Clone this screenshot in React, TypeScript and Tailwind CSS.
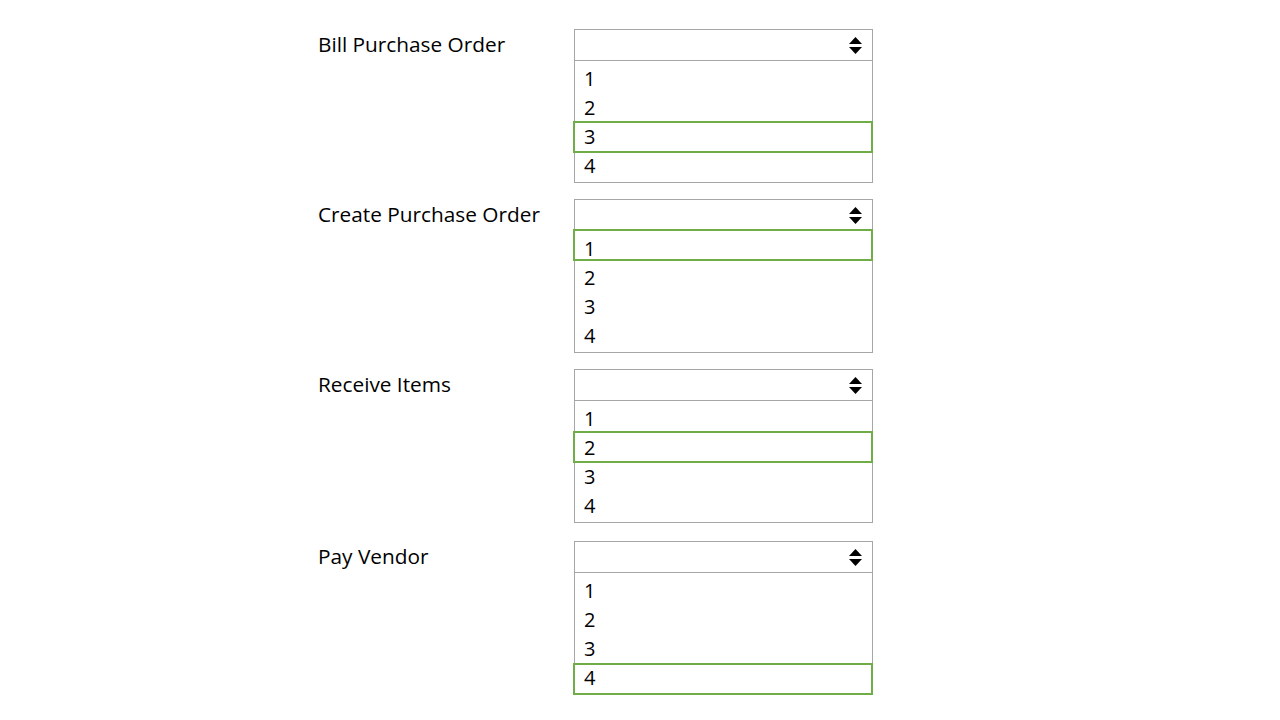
import React from "react";

// 每組的框線位置依截圖微調
const sections = [
  { label: "Bill Purchase Order", selected: 3, gap: "mt-[29px]", mark: "top-[91px]" },
  { label: "Create Purchase Order", selected: 1, gap: "mt-[16px]", mark: "top-[29px]" },
  { label: "Receive Items", selected: 2, gap: "mt-[16px]", mark: "top-[61px]" },
  { label: "Pay Vendor", selected: 4, gap: "mt-[18px]", mark: "top-[121px]" },
];

const SortArrows: React.FC = () => (
  <svg width="13" height="17" viewBox="0 0 13 17" fill="#000">
    <polygon points="0,7 6.5,0 13,7" />
    <polygon points="0,10 13,10 6.5,17" />
  </svg>
);

const App: React.FC = () => {
  return (
    <div
      className="w-[1280px] h-[720px] bg-white text-black overflow-hidden"
      style={{ fontFamily: '"Open Sans", "Noto Sans", sans-serif' }}
    >
      <div className="pl-[318px] flex flex-col">
        {sections.map((s) => (
          <div key={s.label} className={`flex items-start ${s.gap}`}>
            <div className="w-[256px] h-[32px] flex items-center text-[20.8px]">
              {s.label}
            </div>
            <div className="relative w-[299px] h-[154px] border border-[#a6a6a6]">
              {/* 下拉標頭 */}
              <div className="h-[31px] border-b border-[#a6a6a6] flex items-center justify-end pr-[10px]">
                <SortArrows />
              </div>
              {/* 選項 */}
              <div className="pt-[3px]">
                {[1, 2, 3, 4].map((n) => (
                  <div key={n} className="h-[29px] flex items-center pl-[9px] text-[20px]">
                    {n}
                  </div>
                ))}
              </div>
              <div
                className={`absolute -left-[2px] -right-[1px] h-[32px] border-2 border-[#70ad47] ${s.mark}`}
              />
            </div>
          </div>
        ))}
      </div>
    </div>
  );
};

export default App;
